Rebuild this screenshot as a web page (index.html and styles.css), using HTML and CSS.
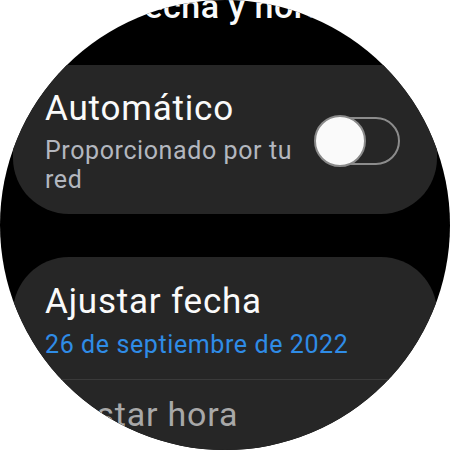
FILE: index.html
```html
<!DOCTYPE html>
<html lang="es">
<head>
    <meta charset="UTF-8">
    <meta name="viewport" content="width=device-width, initial-scale=1.0">
    <title>Fecha y hora</title>
    <link rel="stylesheet" href="styles.css">
</head>
<body>
    <div class="watch">
        <div class="screen">
            <h1 class="page-title">Fecha y hora</h1>

            <div class="card card-auto">
                <div class="item-text">
                    <div class="item-title">Automático</div>
                    <div class="item-sub">Proporcionado por tu red</div>
                </div>
                <div class="switch">
                    <div class="switch-thumb"></div>
                </div>
            </div>

            <div class="card card-list">
                <div class="list-item">
                    <div class="item-title">Ajustar fecha</div>
                    <div class="item-value">26 de septiembre de 2022</div>
                </div>
                <div class="divider"></div>
                <div class="list-item list-item-dim">
                    <div class="item-title">Ajustar hora</div>
                </div>
            </div>
        </div>
    </div>
</body>
</html>
```

FILE: styles.css
```css
body {
    margin: 0;
    background-color: #ffffff;
    font-family: Roboto, "Noto Sans", sans-serif;
}
.watch {
    width: 450px;
    height: 450px;
    border-radius: 50%;
    background-color: #000;
    overflow: hidden;
}
.screen {
    padding: 0 13px;
}
.page-title {
    margin: -13px 0 0;
    font-size: 34px;
    font-weight: 500;
    line-height: 38px;
    letter-spacing: 0.5px;
    text-align: center;
    color: #fafafa;
}
.card {
    background-color: #262626;
    border-radius: 56px;
}
.card-auto {
    margin-top: 40px;
    padding: 23px 37px 20px 32px;
    display: flex;
    align-items: center;
    gap: 15px;
}
.item-text {
    flex: 1;
}
.item-title {
    font-size: 35px;
    line-height: 42px;
    letter-spacing: 0.8px;
    color: #fafafa;
}
.item-sub {
    margin-top: 6px;
    font-size: 25px;
    line-height: 29px;
    letter-spacing: 0.6px;
    color: #b3b7bf;
}
.switch {
    flex: none;
    width: 85px;
    height: 48px;
    box-sizing: border-box;
    border: 2px solid #8c8c8c;
    border-radius: 24px;
    display: flex;
    align-items: center;
}
.switch-thumb {
    flex: none;
    width: 52px;
    height: 52px;
    box-sizing: border-box;
    margin-left: -3px;
    border-radius: 50%;
    border: 2px solid #8a8a8a;
    background-color: #fafafa;
}
.card-list {
    margin-top: 43px;
    padding-bottom: 40px;
}
.list-item {
    padding: 24px 32px 20px;
}
.item-value {
    margin-top: 7px;
    font-size: 25px;
    line-height: 29px;
    letter-spacing: 0.6px;
    color: #2f8ce6;
}
.divider {
    height: 1px;
    background-color: #3a3a3a;
}
.list-item-dim {
    padding-top: 13px;
}
.list-item-dim .item-title {
    font-size: 34px;
    color: #a8a8a8;
}
```
